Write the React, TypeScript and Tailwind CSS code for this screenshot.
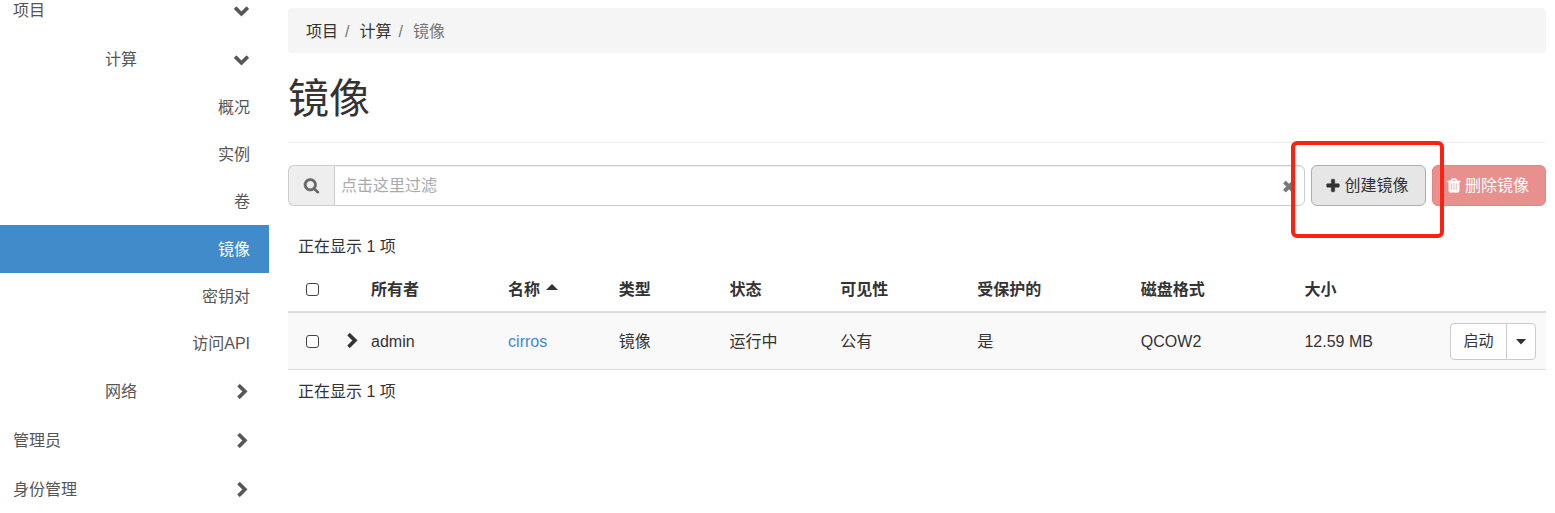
import React from "react";

const ICONS = {
  chevronRight: {
    box: "-70 0 1792 1792",
    d: "M1363 877l-742 742q-19 19-45 19t-45-19l-166-166q-19-19-19-45t19-45l531-531-531-531q-19-19-19-45t19-45l166-166q19-19 45-19t45 19l742 742q19 19 19 45t-19 45z",
  },
  chevronDown: {
    box: "60 110 1792 1792",
    d: "M1683 808l-742 741q-19 19-45 19t-45-19l-742-741q-19-19-19-45.5t19-45.5l166-165q19-19 45-19t45 19l531 531 531-531q19-19 45-19t45 19l166 165q19 19 19 45.5t-19 45.5z",
  },
  search: {
    box: "60 80 1792 1792",
    d: "M1216 832q0-185-131.500-316.500t-316.500-131.500-316.500 131.500-131.500 316.500 131.500 316.500 316.500 131.500 316.500-131.500 131.500-316.500zm512 832q0 52-38 90t-90 38q-54 0-90-38l-343-342q-179 124-399 124-143 0-273.500-55.500t-225-150-150-225-55.500-273.500 55.500-273.500 150-225 225-150 273.500-55.500 273.500 55.500 225 150 150 225 55.500 273.500q0 220-124 399l343 343q37 37 37 90z",
  },
  plus: {
    box: "0 0 1792 1792",
    d: "M1600 736v192q0 40-28 68t-68 28h-416v416q0 40-28 68t-68 28h-192q-40 0-68-28t-28-68v-416h-416q-40 0-68-28t-28-68v-192q0-40 28-68t68-28h416v-416q0-40 28-68t68-28h192q40 0 68 28t28 68v416h416q40 0 68 28t28 68z",
  },
  trash: {
    box: "0 60 1792 1792",
    d: "M704 1376v-704q0-14-9-23t-23-9h-64q-14 0-23 9t-9 23v704q0 14 9 23t23 9h64q14 0 23-9t9-23zm256 0v-704q0-14-9-23t-23-9h-64q-14 0-23 9t-9 23v704q0 14 9 23t23 9h64q14 0 23-9t9-23zm256 0v-704q0-14-9-23t-23-9h-64q-14 0-23 9t-9 23v704q0 14 9 23t23 9h64q14 0 23-9t9-23zm-544-992h448l-48-117q-7-9-17-11h-317q-10 2-17 11zm928 32v64q0 14-9 23t-23 9h-96v948q0 83-47 143.500t-113 60.500h-832q-66 0-113-58.500t-47-141.500v-952h-96q-14 0-23-9t-9-23v-64q0-14 9-23t23-9h309l70-167q15-37 54-63t79-26h320q40 0 79 26t54 63l70 167h309q14 0 23 9t9 23z",
  },
  times: {
    box: "0 0 1792 1792",
    d: "M1490 1322q0 40-28 68l-136 136q-28 28-68 28t-68-28l-294-294-294 294q-28 28-68 28t-68-28l-136-136q-28-28-28-68t28-68l294-294-294-294q-28-28-28-68t28-68l136-136q28-28 68-28t68 28l294 294 294-294q28-28 68-28t68 28l136 136q28 28 28 68t-28 68l-294 294 294 294q28 28 28 68z",
  },
};

function Icon({ name }: { name: keyof typeof ICONS }) {
  return (
    <svg
      viewBox={ICONS[name].box}
      className="size-4 shrink-0 overflow-visible fill-current stroke-current"
      strokeWidth={60}
      aria-hidden="true"
    >
      <path d={ICONS[name].d} />
    </svg>
  );
}

function Group({ label, open = false, className }: { label: string; open?: boolean; className: string }) {
  return (
    <button
      type="button"
      aria-expanded={open}
      className={`flex w-full items-center justify-between pr-[19px] text-left ${className}`}
    >
      {label}
      <Icon name={open ? "chevronDown" : "chevronRight"} />
    </button>
  );
}

function Leaf({ label, active = false }: { label: string; active?: boolean }) {
  return (
    <a
      href="#"
      aria-current={active ? "page" : undefined}
      className={`flex items-center justify-end pt-px pr-[19px] ${
        active ? "h-12 bg-[#428bca] text-white" : "h-[47px]"
      }`}
    >
      {label}
    </a>
  );
}

function Checkbox({ label }: { label: string }) {
  return (
    <input
      type="checkbox"
      aria-label={label}
      className="mx-auto block size-[13px] appearance-none rounded-[3px] border border-[#444] bg-white checked:bg-[#428bca]"
    />
  );
}

const COLUMNS = ["类型", "状态", "可见性", "受保护的", "磁盘格式", "大小"];
const VALUES = ["镜像", "运行中", "公有", "是", "QCOW2", "12.59 MB"];

export default function App() {
  return (
    <div className="flex min-h-screen bg-white font-['Liberation_Sans','Noto_Sans_CJK_SC',sans-serif] text-base text-[#333]">
      <nav className="w-[269px] shrink-0 text-[#555]">
        <Group label="项目" open className="h-[35px] pb-3.5 pl-[13px]" />
        <Group label="计算" open className="h-[49px] pl-[105px]" />
        <Leaf label="概况" />
        <Leaf label="实例" />
        <Leaf label="卷" />
        <Leaf label="镜像" active />
        <Leaf label="密钥对" />
        <Leaf label="访问API" />
        <Group label="网络" className="h-[49px] pl-[105px]" />
        <Group label="管理员" className="h-[49px] pl-[13px]" />
        <Group label="身份管理" className="h-[49px] pl-[13px]" />
      </nav>

      <main className="min-w-0 flex-1 pt-2 pr-[9px] pl-[19px]">
        <ol className="flex h-[45px] items-center rounded bg-[#f5f5f5] px-[18px] pt-0.5">
          <li>
            <a href="#">项目</a>
          </li>
          <li>
            <span className="mr-2.5 ml-[7px] text-[#777]">/</span>
            <a href="#">计算</a>
          </li>
          <li className="text-[#777]">
            <span className="mr-2.5 ml-[7px]">/</span>镜像
          </li>
        </ol>

        <h1 className="mt-6 border-b border-[#eee] pb-5 text-[41px] leading-[45px]">镜像</h1>

        <div className="mt-[22px] flex gap-1.5">
          <div className="flex h-[41px] min-w-0 flex-1">
            <label
              htmlFor="filter"
              className="flex w-[46px] shrink-0 items-center justify-center rounded-l-md border border-r-0 border-[#ccc] bg-[#eee] text-[#666]"
            >
              <Icon name="search" />
            </label>
            <div className="relative min-w-0 flex-1">
              <input
                id="filter"
                type="text"
                placeholder="点击这里过滤"
                className="h-full w-full rounded-r-md border border-[#ccc] pr-8 pl-1.5 shadow-[inset_0_1px_1px_rgba(0,0,0,0.075)] outline-none placeholder:text-[#aaa]"
              />
              <button
                type="button"
                aria-label="清除"
                className="absolute inset-y-0 right-2 flex items-center text-[#777]"
              >
                <Icon name="times" />
              </button>
            </div>
          </div>
          <div className="relative">
            <button
              type="button"
              className="flex h-[41px] w-[115px] items-center justify-center gap-[3px] rounded-md border border-[#adadad] bg-[#e6e6e6] pr-[3px]"
            >
              <Icon name="plus" />
              创建镜像
            </button>
            <div className="pointer-events-none absolute -top-6 -right-[18px] -bottom-8 -left-5 z-10 rounded-md border-4 border-[#ff2010]" />
          </div>
          <button
            type="button"
            className="flex h-[41px] w-[114px] items-center justify-center gap-[3px] rounded-md border border-[#e38583] bg-[#e8908e] pr-[3px] text-white"
          >
            <Icon name="trash" />
            删除镜像
          </button>
        </div>

        <p className="mt-5 px-2.5 py-2.5 leading-[21px]">正在显示 1 项</p>

        <table className="w-full table-fixed border-separate border-spacing-0 text-left">
          <colgroup>
            <col className="w-12" />
            <col className="w-[25px]" />
            <col className="w-[10.9%]" />
            <col className="w-[8.8%]" />
            <col className="w-[8.8%]" />
            <col className="w-[8.8%]" />
            <col className="w-[10.9%]" />
            <col className="w-[13%]" />
            <col className="w-[13%]" />
            <col />
            <col className="w-[106px]" />
          </colgroup>
          <thead>
            <tr className="h-[46px] [&>th]:border-b-2 [&>th]:border-[#ddd]">
              <th>
                <Checkbox label="全选" />
              </th>
              <th />
              <th className="px-2.5 pt-0.5">所有者</th>
              <th className="px-2.5 pt-0.5">
                <span className="flex items-center gap-1.5">
                  名称
                  <svg viewBox="0 0 12 12" className="size-3 fill-current" aria-hidden="true">
                    <path d="M0 6L6 0L12 6Z" />
                  </svg>
                </span>
              </th>
              {COLUMNS.map((c) => (
                <th key={c} className="px-2.5 pt-0.5">
                  {c}
                </th>
              ))}
              <th />
            </tr>
          </thead>
          <tbody>
            <tr className="bg-[#f9f9f9] [&>td]:border-b [&>td]:border-[#ddd]">
              <td>
                <Checkbox label="选择 cirros" />
              </td>
              <td>
                <button type="button" aria-label="展开" className="ml-2 block">
                  <Icon name="chevronRight" />
                </button>
              </td>
              <td className="px-2.5 pt-0.5">admin</td>
              <td className="px-2.5 pt-0.5">
                <a href="#" className="text-[#428bca]">
                  cirros
                </a>
              </td>
              {VALUES.map((v) => (
                <td key={v} className="px-2.5 pt-0.5">
                  {v}
                </td>
              ))}
              <td className="pt-2.5 pr-2.5 pb-[9px]">
                <div className="flex justify-end text-[15px]">
                  <button type="button" className="h-[37px] w-[57px] rounded-l border border-[#ccc] bg-white">
                    启动
                  </button>
                  <button
                    type="button"
                    aria-label="更多操作"
                    className="-ml-px flex h-[37px] w-[30px] items-center justify-center rounded-r border border-[#ccc] bg-white"
                  >
                    <svg viewBox="0 0 10 6" className="h-1.5 w-2.5 fill-current" aria-hidden="true">
                      <path d="M0 0H10L5 5.500Z" />
                    </svg>
                  </button>
                </div>
              </td>
            </tr>
          </tbody>
        </table>

        <p className="px-2.5 py-[11px] leading-[21px]">正在显示 1 项</p>
      </main>
    </div>
  );
}
